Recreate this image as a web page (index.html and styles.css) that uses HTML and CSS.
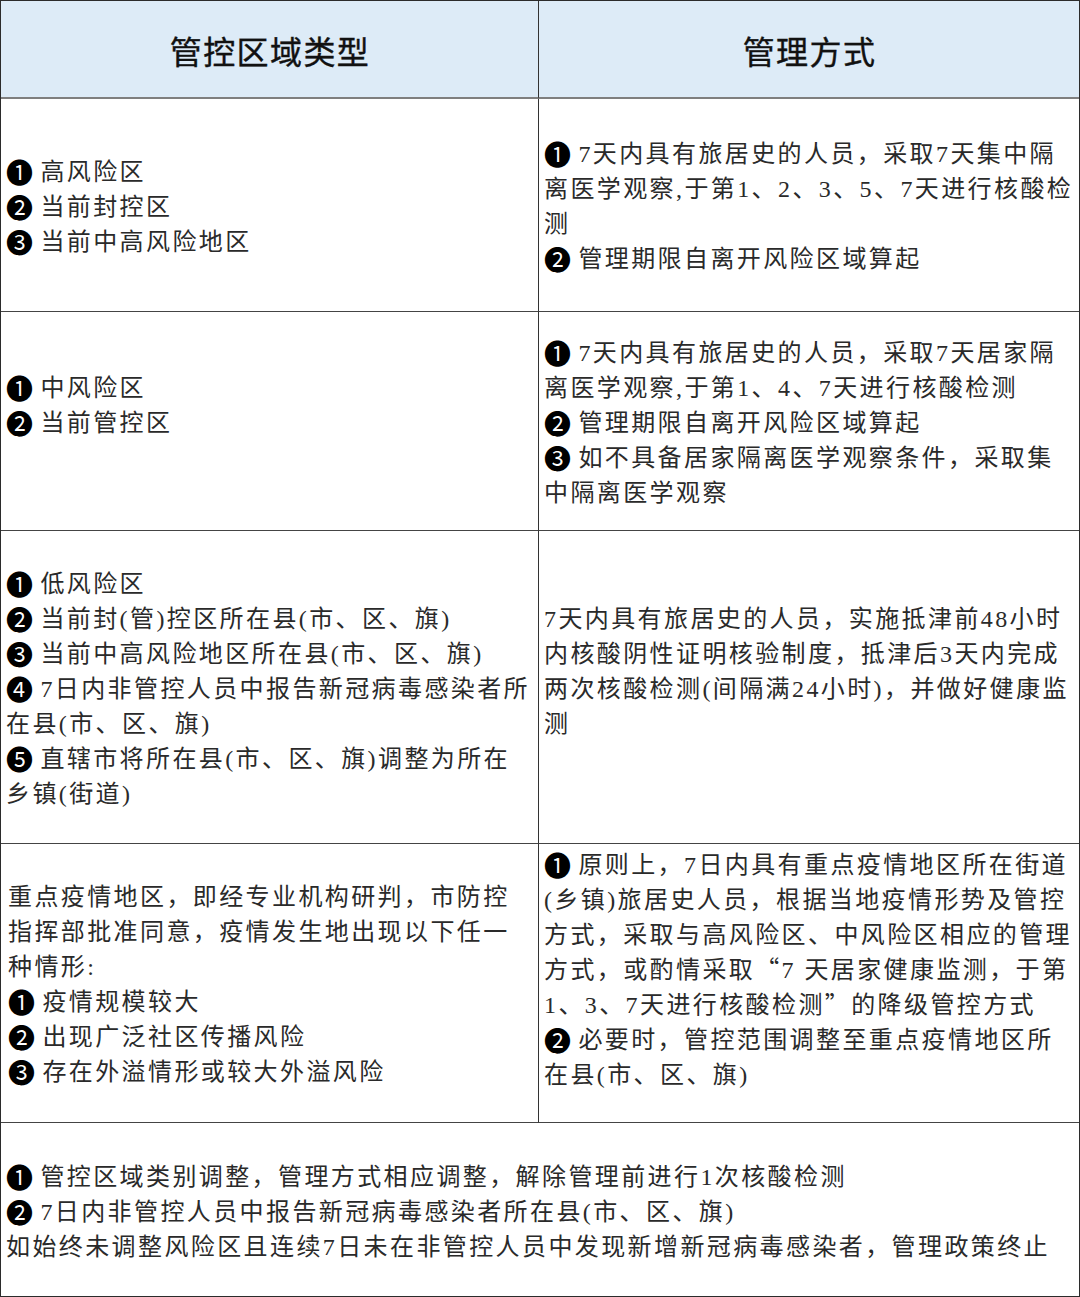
FILE: index.html
```html
<!DOCTYPE html>
<html lang="zh-CN">
<head>
<meta charset="utf-8">
<title>管控区域类型与管理方式</title>
<link rel="stylesheet" href="styles.css">
</head>
<body>
<div class="table">
  <div class="cell head left">管控区域类型</div>
  <div class="cell head">管理方式</div>

  <div class="cell left"><p><span class="n">❶</span> 高风险区<br><span class="n">❷</span> 当前封控区<br><span class="n">❸</span> 当前中高风险地区</p></div>
  <div class="cell"><p><span class="n">❶</span> 7天内具有旅居史的人员，采取7天集中隔<br>离医学观察,于第1、2、3、5、7天进行核酸检<br>测<br><span class="n">❷</span> 管理期限自离开风险区域算起</p></div>

  <div class="cell left"><p class="tail"><span class="n">❶</span> 中风险区<br><span class="n">❷</span> 当前管控区</p></div>
  <div class="cell"><p><span class="n">❶</span> 7天内具有旅居史的人员，采取7天居家隔<br>离医学观察,于第1、4、7天进行核酸检测<br><span class="n">❷</span> 管理期限自离开风险区域算起<br><span class="n">❸</span> 如不具备居家隔离医学观察条件，采取集<br>中隔离医学观察</p></div>

  <div class="cell left"><p><span class="n">❶</span> 低风险区<br><span class="n">❷</span> 当前封(管)控区所在县(市、区、旗)<br><span class="n">❸</span> 当前中高风险地区所在县(市、区、旗)<br><span class="n">❹</span> 7日内非管控人员中报告新冠病毒感染者所<br>在县(市、区、旗)<br><span class="n">❺</span> 直辖市将所在县(市、区、旗)调整为所在<br>乡镇(街道)</p></div>
  <div class="cell"><p class="tail">7天内具有旅居史的人员，实施抵津前48小时<br>内核酸阴性证明核验制度，抵津后3天内完成<br>两次核酸检测(间隔满24小时)，并做好健康监<br>测</p></div>

  <div class="cell left"><p class="indent">重点疫情地区，即经专业机构研判，市防控<br>指挥部批准同意，疫情发生地出现以下任一<br>种情形:<br><span class="n">❶</span> 疫情规模较大<br><span class="n">❷</span> 出现广泛社区传播风险<br><span class="n">❸</span> 存在外溢情形或较大外溢风险</p></div>
  <div class="cell top"><p><span class="n">❶</span> 原则上，7日内具有重点疫情地区所在街道<br>(乡镇)旅居史人员，根据当地疫情形势及管控<br>方式，采取与高风险区、中风险区相应的管理<br>方式，或酌情采取<span class="q">“</span>7 天居家健康监测，于第<br>1、3、7天进行核酸检测<span class="q">”</span>的降级管控方式<br><span class="n">❷</span> 必要时，管控范围调整至重点疫情地区所<br>在县(市、区、旗)</p></div>

  <div class="cell full"><p><span class="n">❶</span> 管控区域类别调整，管理方式相应调整，解除管理前进行1次核酸检测<br><span class="n">❷</span> 7日内非管控人员中报告新冠病毒感染者所在县(市、区、旗)<br>如始终未调整风险区且连续7日未在非管控人员中发现新增新冠病毒感染者，管理政策终止</p></div>
</div>
</body>
</html>
```

FILE: styles.css
```css
html, body {
  margin: 0;
  padding: 0;
  background: #ffffff;
}

.table {
  width: 1080px;
  height: 1297px;
  box-sizing: border-box;
  display: grid;
  grid-template-columns: 538px 1fr;
  grid-template-rows: 98px 213px 219px 313px 279px 175px;
  border: 1px solid #2b2b2b;
  font-family: "Liberation Serif", "Noto Sans CJK SC", serif;
  color: #2a2a2a;
  font-size: 24px;
  letter-spacing: 2.4px;
  line-height: 35px;
}

.cell {
  box-sizing: border-box;
  display: flex;
  align-items: center;
  padding: 0 4px 0 5px;
  border-bottom: 1px solid #444444;
  white-space: nowrap;
  overflow: visible;
}

.cell p {
  margin: 0;
  padding-top: 4px;
}

.cell.left {
  border-right: 1px solid #333333;
}

.cell.head {
  background: #ddebf7;
  justify-content: center;
  font-size: 32px;
  font-weight: 400;
  color: #111111;
  letter-spacing: 1.4px;
  padding-top: 8px;
  border-bottom: 2px solid #7f7f7f;
  -webkit-text-stroke: 0.4px #111111;
}

.cell.full {
  grid-column: 1 / -1;
  border-bottom: none;
}

.cell.top {
  align-items: flex-start;
  padding-top: 0;
}

.cell p.tail {
  padding-bottom: 35px;
}

.cell p.indent {
  padding-left: 2px;
}

.n {
  font-family: "Noto Sans CJK SC", "DejaVu Sans", sans-serif;
  font-size: 27px;
  line-height: 0;
  vertical-align: -3px;
  letter-spacing: 0;
  margin-right: -1px;
  color: #000000;
}

.q {
  font-family: "Noto Sans CJK SC", sans-serif;
  line-height: 0;
}
```
